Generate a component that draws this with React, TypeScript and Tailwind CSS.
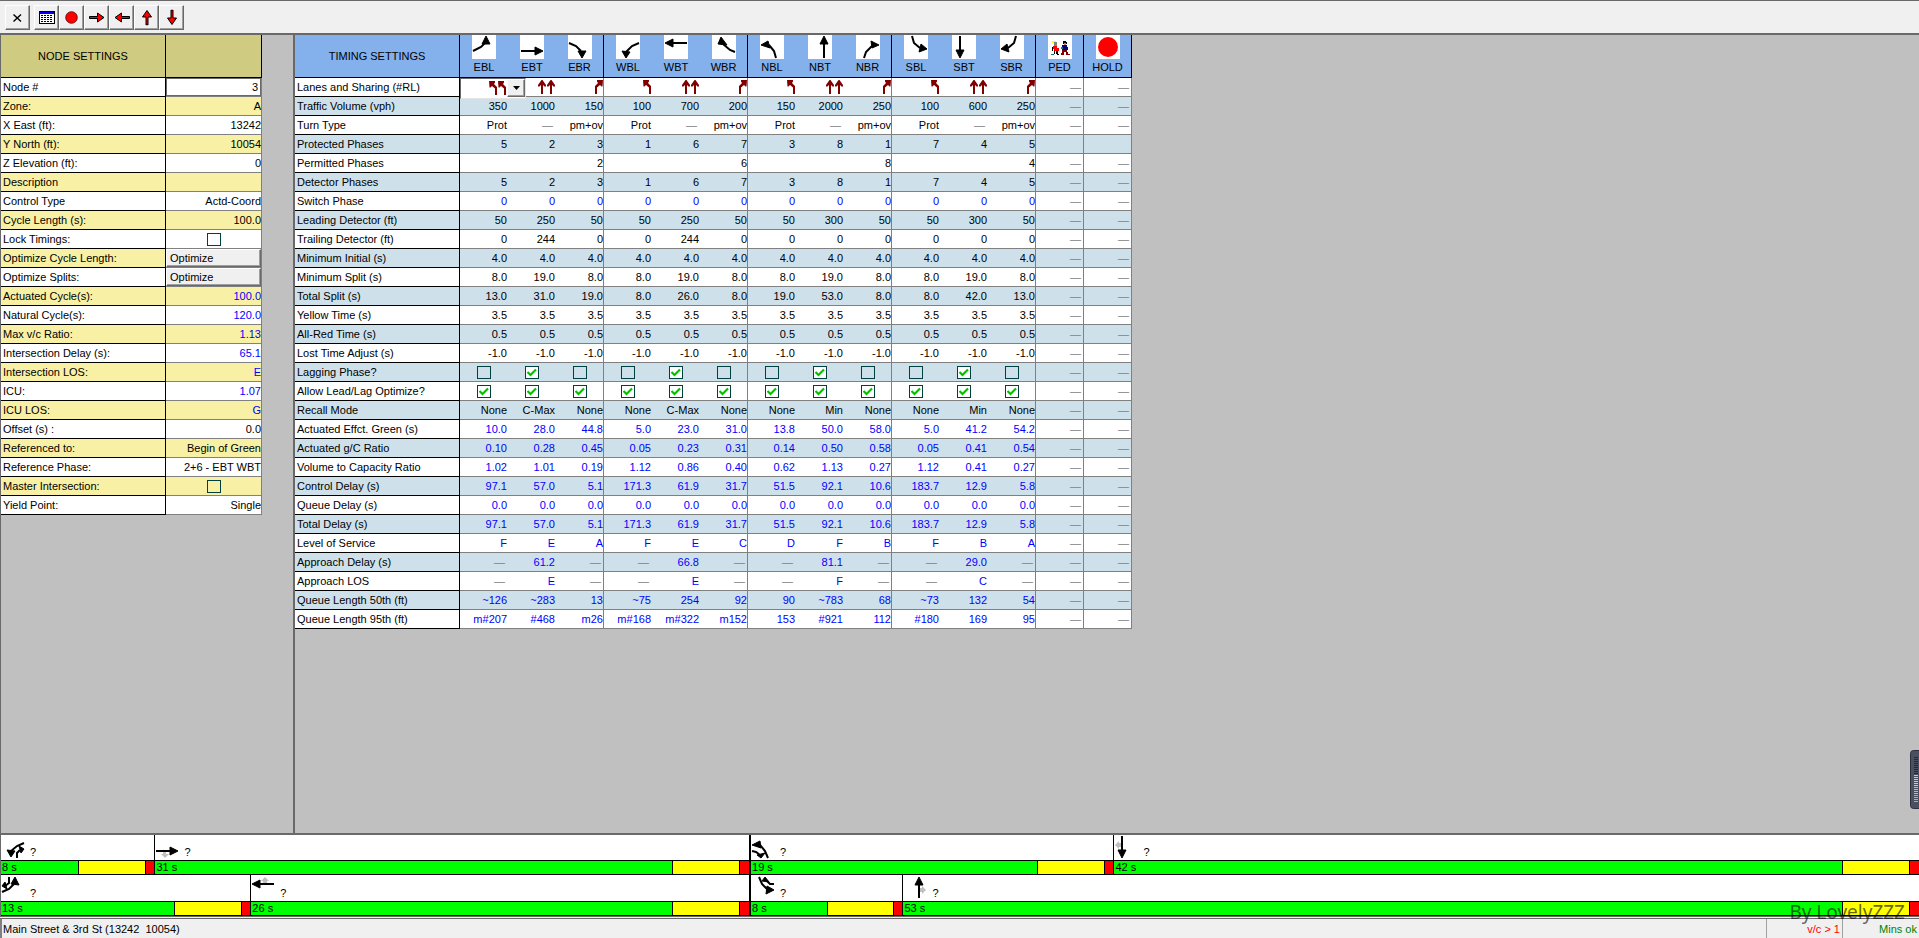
import { useState, type ReactNode } from "react";
import clsx from "clsx";

type NodeRow = {
  label: string;
  value?: string;
  kind?: "input" | "checkbox" | "button";
  computed?: boolean;
};

const nodeRows: NodeRow[] = [
  { label: "Node #", value: "3", kind: "input" },
  { label: "Zone:", value: "A" },
  { label: "X East (ft):", value: "13242" },
  { label: "Y North (ft):", value: "10054" },
  { label: "Z Elevation (ft):", value: "0" },
  { label: "Description", value: "" },
  { label: "Control Type", value: "Actd-Coord" },
  { label: "Cycle Length (s):", value: "100.0" },
  { label: "Lock Timings:", kind: "checkbox" },
  { label: "Optimize Cycle Length:", value: "Optimize", kind: "button" },
  { label: "Optimize Splits:", value: "Optimize", kind: "button" },
  { label: "Actuated Cycle(s):", value: "100.0", computed: true },
  { label: "Natural Cycle(s):", value: "120.0", computed: true },
  { label: "Max v/c Ratio:", value: "1.13", computed: true },
  { label: "Intersection Delay (s):", value: "65.1", computed: true },
  { label: "Intersection LOS:", value: "E", computed: true },
  { label: "ICU:", value: "1.07", computed: true },
  { label: "ICU LOS:", value: "G", computed: true },
  { label: "Offset (s) :", value: "0.0" },
  { label: "Referenced to:", value: "Begin of Green" },
  { label: "Reference Phase:", value: "2+6 - EBT WBT" },
  { label: "Master Intersection:", kind: "checkbox" },
  { label: "Yield Point:", value: "Single" },
];

// curve + arrow head for every movement, on a 24x24 grid
const movements = [
  { name: "EBL", line: "M1 16 L9 12 L14 7", head: "14,1 10,9 18,9" },
  { name: "EBT", line: "M1 16 H16", head: "23,16 15,12 15,20" },
  { name: "EBR", line: "M1 8 L8 11 L13 16", head: "14,23 10,16 18,16" },
  { name: "WBL", line: "M23 8 L16 11 L10 17", head: "10,23 6,16 14,17" },
  { name: "WBT", line: "M23 8 H8", head: "1,8 9,4 9,12" },
  { name: "WBR", line: "M23 17 L18 15 L11 9", head: "9,2 6,9 15,10" },
  { name: "NBL", line: "M16 23 L14 16 L9 10", head: "1,10 8,6 10,13" },
  { name: "NBT", line: "M16 23 V8", head: "16,1 12,9 20,9" },
  { name: "NBR", line: "M8 23 L10 17 L16 11", head: "23,10 15,6 16,13" },
  { name: "SBL", line: "M8 1 L10 8 L16 13", head: "23,14 17,9 15,17" },
  { name: "SBT", line: "M8 1 V16", head: "8,23 4,15 12,15" },
  { name: "SBR", line: "M16 1 L14 8 L8 13", head: "1,14 7,9 9,17" },
];

// cells are separated by spaces, "-" is an empty cell and "--" a dash
const timingRows: { label: string; cells: string; computed?: boolean; noPed?: boolean }[] = [
  { label: "Lanes and Sharing (#RL)", cells: "LL TT R L TT R L TT R L TT R" },
  { label: "Traffic Volume (vph)", cells: "350 1000 150 100 700 200 150 2000 250 100 600 250" },
  { label: "Turn Type", cells: "Prot -- pm+ov Prot -- pm+ov Prot -- pm+ov Prot -- pm+ov" },
  { label: "Protected Phases", cells: "5 2 3 1 6 7 3 8 1 7 4 5", noPed: true },
  { label: "Permitted Phases", cells: "- - 2 - - 6 - - 8 - - 4" },
  { label: "Detector Phases", cells: "5 2 3 1 6 7 3 8 1 7 4 5" },
  { label: "Switch Phase", cells: "0 0 0 0 0 0 0 0 0 0 0 0", computed: true },
  { label: "Leading Detector (ft)", cells: "50 250 50 50 250 50 50 300 50 50 300 50" },
  { label: "Trailing Detector (ft)", cells: "0 244 0 0 244 0 0 0 0 0 0 0" },
  { label: "Minimum Initial (s)", cells: "4.0 4.0 4.0 4.0 4.0 4.0 4.0 4.0 4.0 4.0 4.0 4.0" },
  { label: "Minimum Split (s)", cells: "8.0 19.0 8.0 8.0 19.0 8.0 8.0 19.0 8.0 8.0 19.0 8.0" },
  { label: "Total Split (s)", cells: "13.0 31.0 19.0 8.0 26.0 8.0 19.0 53.0 8.0 8.0 42.0 13.0" },
  { label: "Yellow Time (s)", cells: "3.5 3.5 3.5 3.5 3.5 3.5 3.5 3.5 3.5 3.5 3.5 3.5" },
  { label: "All-Red Time (s)", cells: "0.5 0.5 0.5 0.5 0.5 0.5 0.5 0.5 0.5 0.5 0.5 0.5" },
  { label: "Lost Time Adjust (s)", cells: "-1.0 -1.0 -1.0 -1.0 -1.0 -1.0 -1.0 -1.0 -1.0 -1.0 -1.0 -1.0" },
  { label: "Lagging Phase?", cells: "off on off off on off off on off off on off" },
  { label: "Allow Lead/Lag Optimize?", cells: "on on on on on on on on on on on on" },
  { label: "Recall Mode", cells: "None C-Max None None C-Max None None Min None None Min None" },
  { label: "Actuated Effct. Green (s)", cells: "10.0 28.0 44.8 5.0 23.0 31.0 13.8 50.0 58.0 5.0 41.2 54.2", computed: true },
  { label: "Actuated g/C Ratio", cells: "0.10 0.28 0.45 0.05 0.23 0.31 0.14 0.50 0.58 0.05 0.41 0.54", computed: true },
  { label: "Volume to Capacity Ratio", cells: "1.02 1.01 0.19 1.12 0.86 0.40 0.62 1.13 0.27 1.12 0.41 0.27", computed: true },
  { label: "Control Delay (s)", cells: "97.1 57.0 5.1 171.3 61.9 31.7 51.5 92.1 10.6 183.7 12.9 5.8", computed: true },
  { label: "Queue Delay (s)", cells: "0.0 0.0 0.0 0.0 0.0 0.0 0.0 0.0 0.0 0.0 0.0 0.0", computed: true },
  { label: "Total Delay (s)", cells: "97.1 57.0 5.1 171.3 61.9 31.7 51.5 92.1 10.6 183.7 12.9 5.8", computed: true },
  { label: "Level of Service", cells: "F E A F E C D F B F B A", computed: true },
  { label: "Approach Delay (s)", cells: "-- 61.2 -- -- 66.8 -- -- 81.1 -- -- 29.0 --", computed: true },
  { label: "Approach LOS", cells: "-- E -- -- E -- -- F -- -- C --", computed: true },
  { label: "Queue Length 50th (ft)", cells: "~126 ~283 13 ~75 254 92 90 ~783 68 ~73 132 54", computed: true },
  { label: "Queue Length 95th (ft)", cells: "m#207 #468 m26 m#168 m#322 m152 153 #921 112 #180 169 95", computed: true },
];

type Phase = {
  split: number;
  lines: string;
  heads: string[];
  ghost?: string;
  barrier?: boolean;
};

const rings: Phase[][] = [
  [
    {
      split: 8,
      lines: "M23 8 L16 11 L10 16 M16 23 V18 L19 15",
      heads: ["10,22 6,15 14,16", "23,14 18,11 20,18"],
    },
    { split: 31, lines: "M1 16 H16", heads: ["23,16 15,12 15,20"], ghost: "8,17 11,17 11,19 14,19 10,23 6,19 8,19" },
    {
      split: 19,
      lines: "M17 23 L14 16 L9 10 M1 16 L5 17 L9 20",
      heads: ["1,10 9,6 10,13", "10,23 6,20 14,18"],
      barrier: true,
    },
    { split: 42, lines: "M8 1 V16", heads: ["8,23 4,15 12,15"], ghost: "1,10 5,6 5,8 7,8 7,12 5,12 5,14" },
  ],
  [
    {
      split: 13,
      lines: "M1 17 L8 14 L14 8 M8 2 V8 L4 11",
      heads: ["14,2 10,9 18,10", "1,11 4,7 6,14"],
    },
    { split: 26, lines: "M23 9 H8", heads: ["1,9 9,5 9,13"], ghost: "14,2 18,6 16,6 16,8 12,8 12,6 10,6" },
    {
      split: 8,
      lines: "M8 2 L11 9 L17 15 M23 9 H19 L15 5",
      heads: ["23,15 16,11 15,19", "14,2 11,6 18,7"],
      barrier: true,
    },
    { split: 53, lines: "M16 23 V9", heads: ["16,2 12,10 20,10"], ghost: "17,13 19,13 19,11 23,15 19,19 19,17 17,17" },
  ],
];

const YELLOW = 3.5;
const ALL_RED = 0.5;

function ToolButton({ label, children }: { label: string; children: ReactNode }) {
  return (
    <button
      aria-label={label}
      className="flex h-[25px] w-[25px] items-center justify-center border border-t-white border-l-white border-r-[#696969] border-b-[#696969] bg-[#f0f0f0] shadow-[inset_-1px_-1px_0_#a0a0a0]"
    >
      {children}
    </button>
  );
}

function RedArrow({ className }: { className?: string }) {
  return (
    <svg viewBox="0 0 16 13" className={clsx("h-[13px] w-4", className)}>
      <path
        d="M0.5 5.5 H8.5 V2 L15 6.5 L8.5 11 V7.5 H0.5 Z"
        fill="#ff0000"
        stroke="#000"
        strokeWidth="1"
      />
    </svg>
  );
}

function Toolbar() {
  return (
    <div className="flex h-[35px] shrink-0 items-start border-t border-b-2 border-[#696969] bg-[#f0f0f0] pt-1 pl-[5px]">
      <ToolButton label="Close">
        <svg viewBox="0 0 9 8" className="h-2 w-[9px]">
          <path d="M0.5 0.5 L8 7.5 M8 0.5 L0.5 7.5" stroke="#000" strokeWidth="1.4" fill="none" />
        </svg>
      </ToolButton>
      <div className="ml-1 flex">
        <ToolButton label="Timing window">
          <svg viewBox="0 0 16 13" className="h-[13px] w-4" shapeRendering="crispEdges">
            <rect x="0" y="0" width="16" height="13" fill="#000" />
            <rect x="1" y="1" width="14" height="2" fill="#0000ff" />
            <rect x="1" y="3" width="14" height="9" fill="#fff" />
            <path d="M2 4.5 H14 M2 6.5 H14 M2 8.5 H14 M2 10.5 H14" stroke="#000" strokeDasharray="2 1" />
          </svg>
        </ToolButton>
        <ToolButton label="Stop">
          <svg viewBox="0 0 13 13" className="h-[13px] w-[13px]">
            <circle cx="6.5" cy="6.5" r="5.8" fill="#ff0000" stroke="#500000" strokeWidth="0.8" />
          </svg>
        </ToolButton>
        <ToolButton label="East">
          <RedArrow />
        </ToolButton>
        <ToolButton label="West">
          <RedArrow className="rotate-180" />
        </ToolButton>
        <ToolButton label="North">
          <RedArrow className="-rotate-90" />
        </ToolButton>
        <ToolButton label="South">
          <RedArrow className="rotate-90" />
        </ToolButton>
      </div>
    </div>
  );
}

function CheckBox({ label, initial = false }: { label: string; initial?: boolean }) {
  const [checked, setChecked] = useState(initial);
  return (
    <label className="relative mx-auto flex h-[18px] w-3.5 items-center">
      <input
        type="checkbox"
        aria-label={label}
        checked={checked}
        onChange={() => setChecked(!checked)}
        className="peer h-[13px] w-3.5 appearance-none border border-[#004040] checked:bg-white"
      />
      <svg
        viewBox="0 0 14 13"
        className="pointer-events-none absolute left-0 hidden h-[13px] w-3.5 peer-checked:block"
      >
        <path d="M2.5 6 L5.5 9 L11 3.5" fill="none" stroke="#00c000" strokeWidth="2.2" />
      </svg>
    </label>
  );
}

function NodeValue({ row }: { row: NodeRow }) {
  if (row.kind === "checkbox") return <CheckBox label={row.label} />;
  if (row.kind === "button")
    return (
      <button
        aria-label={row.label}
        className="block h-[18px] w-full border border-t-white border-l-white border-r-[#696969] border-b-[#696969] bg-[#f0f0f0] pl-[3px] text-left leading-4 shadow-[inset_-1px_-1px_0_#a0a0a0]"
      >
        {row.value}
      </button>
    );
  if (row.kind === "input")
    return (
      <input
        aria-label={row.label}
        defaultValue={row.value}
        className="block h-[18px] w-full border border-[#696969] bg-white pr-0.5 text-right outline-none"
      />
    );
  return <>{row.value}</>;
}

function NodeSettings() {
  return (
    <div className="w-[293px] shrink-0 border-l border-[#696969]">
      <table className="w-[261px] table-fixed border-separate border-spacing-0">
        <thead>
          <tr className="h-[43px] bg-[#cfcc82]">
            <th className="w-[165px] border-r border-b border-black p-0 font-normal">NODE SETTINGS</th>
            <th className="w-24 border-r border-b border-black p-0" />
          </tr>
        </thead>
        <tbody>
          {nodeRows.map((row, i) => (
            <tr key={row.label} className={clsx("h-[19px]", i % 2 ? "bg-[#f8f1a5]" : "bg-white")}>
              <th className="border-r border-b border-black p-0 pl-0.5 text-left font-normal">{row.label}</th>
              <td
                className={clsx(
                  "border-r border-b border-[#808080] p-0 text-right",
                  row.computed && "text-[#0000ff]"
                )}
              >
                <NodeValue row={row} />
              </td>
            </tr>
          ))}
        </tbody>
      </table>
    </div>
  );
}

const lanePaths: Record<string, string> = {
  T: "M3.5 0 H4.5 L8 5 V6.5 H6.5 L5 5 V14 H3 V5 L1.5 6.5 H0 V5 Z",
  L: "M0 0 H6 V1.5 L5 3 L8 6 V14 H6 V7.5 L3 5 L1.5 6.5 H0.5 Z",
  R: "M8 0 H2 V1.5 L3 3 L0 6 V14 H2 V7.5 L5 5 L6.5 6.5 H7.5 Z",
};

function LaneArrows({ lanes }: { lanes: string }) {
  return (
    <span className="flex h-[18px] items-center justify-end gap-px">
      {lanes.split("").map((lane, i) => (
        <svg key={i} viewBox="0 0 8 14" className="h-3.5 w-2">
          <path d={lanePaths[lane]} fill="#800000" />
        </svg>
      ))}
    </span>
  );
}

function LaneSelect() {
  return (
    <div className="relative h-[18px]">
      <div className="absolute top-0 left-0 z-10 flex h-[21px] w-[66px] border border-t-[#696969] border-l-[#696969] border-r-[#e3e3e3] border-b-[#e3e3e3] bg-white">
        <span className="w-[45px]">
          <LaneArrows lanes="LL" />
        </span>
        <span className="ml-px flex h-[18px] w-[18px] items-center justify-center border border-t-white border-l-white border-r-[#696969] border-b-[#696969] bg-[#f0f0f0] shadow-[inset_-1px_-1px_0_#a0a0a0]">
          <svg viewBox="0 0 7 4" className="h-1 w-[7px]">
            <path d="M0 0 H7 L3.5 4 Z" fill="#000" />
          </svg>
        </span>
        <select aria-label="EBL lanes" className="absolute inset-0 h-full w-full opacity-0">
          <option>2</option>
        </select>
      </div>
    </div>
  );
}

function TimingCell({ text, label, first }: { text: string; label: string; first: boolean }) {
  if (text === "--") return <span className="block pr-0.5 text-[#808080]">—</span>;
  if (text === "-") return null;
  if (text === "on" || text === "off") return <CheckBox label={label} initial={text === "on"} />;
  if (/^[LTR]{1,2}$/.test(text)) return first ? <LaneSelect /> : <LaneArrows lanes={text} />;
  return <>{text}</>;
}

function HeaderCell({ name, end, children }: { name: string; end: boolean; children: ReactNode }) {
  return (
    <th className={clsx("w-12 border-b border-black p-0 align-top font-normal", end && "border-r")}>
      <svg viewBox="0 0 24 24" className="mx-auto h-6 w-6 bg-white">
        {children}
      </svg>
      <span className="block leading-[17px]">{name}</span>
    </th>
  );
}

function TimingSettings() {
  return (
    <div className="flex-1 border-l-2 border-[#696969]">
      <table className="w-[837px] table-fixed border-separate border-spacing-0">
        <thead>
          <tr className="h-[43px] bg-[#84b0eb]">
            <th className="w-[165px] border-r border-b border-black p-0 font-normal">TIMING SETTINGS</th>
            {movements.map((m, i) => (
              <HeaderCell key={m.name} name={m.name} end={i % 3 === 2}>
                <path d={m.line} fill="none" stroke="#000" strokeWidth="2" />
                <polygon points={m.head} stroke="#000" strokeWidth="1" />
              </HeaderCell>
            ))}
            <HeaderCell name="PED" end>
              <g shapeRendering="crispEdges">
                <path d="M4 6 h4 v1 h-2 v1 h-2z" fill="#ffff00" />
                <path d="M6 7 h3 v4 h-3z" fill="#808080" />
                <path d="M5 11 h4 v2 h2 v3 h-5 v-2 h-1z" fill="#ff0000" />
                <path d="M4 12 h1 v4 h-1z M6 16 h1 v3 h-1z M8 16 h2 v3 h-2z M9 19 h2 v1 h-2z" fill="#000" />
                <path d="M3 19 h3 v1 h-3z" fill="#008080" />
                <path d="M15 6 h3 v1 h1 v2 h-4z" fill="#000" />
                <path d="M16 8 h2 v2 h-2z" fill="#c08060" />
                <path d="M14 10 h5 v2 h1 v3 h-6z" fill="#000080" />
                <path d="M13 12 h2 v2 h-2z" fill="#008080" />
                <path d="M14 15 h5 v2 h1 v2 h2 v1 h-4 v-3 h-2 v3 h-3 v-2 h1z" fill="#800000" />
              </g>
            </HeaderCell>
            <HeaderCell name="HOLD" end>
              <circle cx="12" cy="12" r="10" fill="#ff0000" />
            </HeaderCell>
          </tr>
        </thead>
        <tbody>
          {timingRows.map((row, r) => {
            const ped = row.noPed ? "-" : "--";
            return (
              <tr key={row.label} className={clsx("h-[19px]", r % 2 ? "bg-[#cee1eb]" : "bg-white")}>
                <th className="border-r border-b border-black p-0 pl-0.5 text-left font-normal">{row.label}</th>
                {[...row.cells.split(" "), ped, ped].map((text, i) => (
                  <td
                    key={i}
                    className={clsx(
                      "border-b border-[#808080] p-0 text-right",
                      i % 3 === 2 || i > 11 ? "border-r" : i > 0 || r > 0 ? "pr-px" : "",
                      row.computed && "text-[#0000ff]"
                    )}
                  >
                    <TimingCell
                      text={text}
                      first={i === 0}
                      label={`${movements[i]?.name ?? ""} ${row.label}`}
                    />
                  </td>
                ))}
              </tr>
            );
          })}
        </tbody>
      </table>
    </div>
  );
}

function Ring({ phases, tall }: { phases: Phase[]; tall: boolean }) {
  return (
    <div className="flex">
      {phases.map((phase, i) => (
        <div
          key={i}
          className={clsx("border-black", i > 0 && (phase.barrier ? "border-l-2" : "border-l"))}
          style={{ width: `${phase.split}%` }}
        >
          <div className={clsx("flex gap-[5px] bg-white", tall ? "h-[26px]" : "h-[25px]")}>
            <svg viewBox="0 0 24 24" className="h-6 w-6">
              {phase.ghost && <polygon points={phase.ghost} fill="#c0c0c0" />}
              <path d={phase.lines} fill="none" stroke="#000" strokeWidth="2" />
              {phase.heads.map((head) => (
                <polygon key={head} points={head} stroke="#000" strokeWidth="1" />
              ))}
            </svg>
            <span className="self-end leading-4">?</span>
          </div>
          <div className="flex h-[15px] border-y border-black leading-[13px]">
            <div className="flex-1 bg-[#00ff00] pl-px">{phase.split} s</div>
            <div
              className="border-l border-black bg-[#ffff00]"
              style={{ width: `${(YELLOW / phase.split) * 100}%` }}
            />
            <div
              className="border-l border-black bg-[#ff0000]"
              style={{ width: `${(ALL_RED / phase.split) * 100}%` }}
            />
          </div>
        </div>
      ))}
    </div>
  );
}

function LevelMeter() {
  return (
    <svg viewBox="0 0 9 60" className="absolute top-[750px] right-0 h-[60px] w-[9px]">
      <rect x="0.5" y="0.5" width="14" height="58" rx="3" fill="#4a5060" stroke="#2c303c" />
      {Array.from({ length: 23 }, (_, i) => (
        <rect
          key={i}
          x="4"
          y={7 + i * 2}
          width="4"
          height="1"
          fill={i < 9 ? "#252833" : i < 15 ? "#d8d860" : i < 19 ? "#90d890" : "#50d8d0"}
        />
      ))}
    </svg>
  );
}

export default function App() {
  return (
    <div className="relative flex h-screen flex-col overflow-hidden bg-[#c0c0c0] font-['Liberation_Sans',Arial,sans-serif] text-[11px] leading-[18px] text-black">
      <Toolbar />
      <main className="flex min-h-0 flex-1">
        <NodeSettings />
        <TimingSettings />
      </main>

      {/* Splits and phasing diagram */}
      <section className="shrink-0 border-t-2 border-l border-[#696969]">
        {rings.map((phases, i) => (
          <Ring key={i} phases={phases} tall={i === 1} />
        ))}
      </section>

      {/* Status bar */}
      <footer className="flex h-[22px] shrink-0 border-t-[3px] border-double border-[#696969] bg-[#f0f0f0] leading-5">
        <div className="flex-1 border-l-2 border-[#808080] pl-px whitespace-pre">
          {"Main Street & 3rd St (13242  10054)"}
        </div>
        <div className="w-[76px] border-l border-[#a0a0a0] pr-0.5 text-right text-[#ff0000]">{"v/c > 1"}</div>
        <div className="w-[77px] border-l border-[#a0a0a0] pr-0.5 text-right text-[#008000]">Mins ok</div>
      </footer>

      <LevelMeter />
      <div className="pointer-events-none absolute right-3.5 bottom-3.5 font-['Noto_Sans',sans-serif] text-[19px] leading-6 text-black/60">
        By LovelyZZZ
      </div>
    </div>
  );
}
